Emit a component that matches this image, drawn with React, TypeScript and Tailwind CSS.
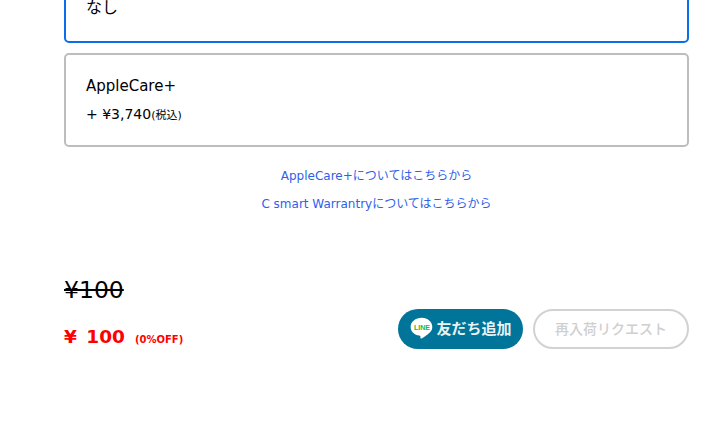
export default function App() {
  return (
    <div className="h-[437px] w-[721px] overflow-hidden bg-white text-black font-['DejaVu_Sans','Noto_Sans_CJK_JP',sans-serif]">
      <div className="mt-[-40px] ml-[64px] w-[625px]">
        <div className="h-[83px] rounded-[5px] border-2 border-[#0a6ee8] pl-5 pt-[35px] text-[16px] leading-[22px]">なし</div>
        <div className="mt-[10px] h-[94px] rounded-[5px] border-2 border-[#bdbdbd] pl-5 pt-[20px]">
          <p className="text-[15px] leading-[22px]">AppleCare+</p>
          <p className="mt-[7px] text-[14px] leading-[20px]">+ ¥3,740<span className="text-[11px]">(税込)</span></p>
        </div>
        <div className="mt-[15px] flex flex-col items-center text-[12px] leading-[28px] text-[#2f5fe8]">
          <a>AppleCare+についてはこちらから</a>
          <a>C smart Warrantryについてはこちらから</a>
        </div>
        <div className="mt-[56px] flex items-end justify-between">
          <div>
            <p className="text-[23.5px] leading-[32px] line-through">¥100</p>
            <p className="mt-[19px] flex items-baseline font-bold text-[#ff0000] leading-[24px]">
              <span className="text-[18.5px] [word-spacing:3px]">¥ 100</span>
              <span className="ml-[10px] text-[10px]">(0%OFF)</span>
            </p>
          </div>
          <div className="mb-[3px] flex items-center gap-[10px] font-['Noto_Sans','Noto_Sans_CJK_JP',sans-serif]">
            <button className="flex h-[40px] w-[125px] items-center justify-center gap-[1px] rounded-full bg-[#007499] pb-[2px] text-[15px] font-semibold text-[#e6f2f5]">
              <svg width="26" height="26" viewBox="0 0 24 24">
                <path d="M12 2.500C5.900 2.500 1.500 6.200 1.500 11c0 4.300 3.400 7.300 8 8 .4.100.9.300 1 .7.100.4 0 .9 0 1.300 0 .6.400 1 1.200.6 1.500-.8 5.600-3.300 7.500-5.400 1.600-1.600 2.300-3.300 2.300-5.200 0-4.800-4.400-8.500-9.500-8.500z" fill="#fff"/>
                <text x="12" y="13.500" textAnchor="middle" fontSize="6.500" fontWeight="800" fill="#22b82f" fontFamily="Liberation Sans, sans-serif">LINE</text>
              </svg>
              友だち追加
            </button>
            <button className="h-[40px] w-[156px] rounded-full border-2 border-[#d2d2d2] bg-white pb-[2px] text-[14px] font-medium text-[#cfcfcf]">再入荷リクエスト</button>
          </div>
        </div>
      </div>
    </div>
  );
}
